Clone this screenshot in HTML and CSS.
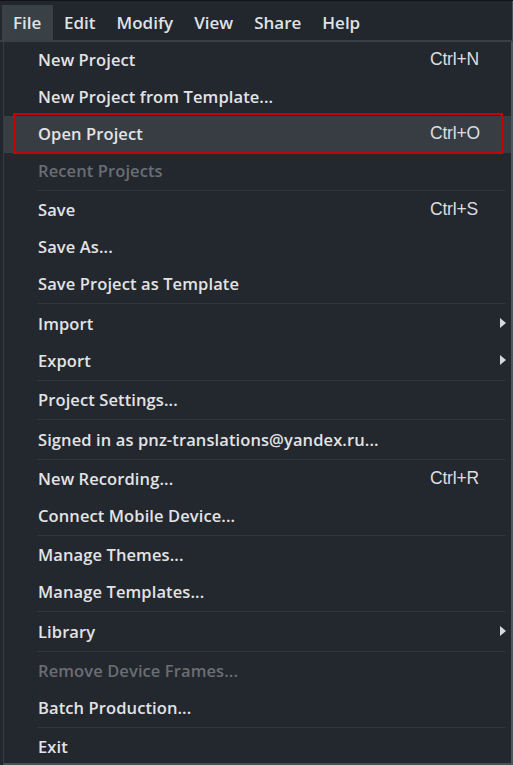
FILE: index.html
```html
<!DOCTYPE html>
<html>
<head>
<meta charset="utf-8">
<link rel="stylesheet" href="styles.css">
</head>
<body>
<div class="app">
  <div class="menubar">
    <span class="tab active">File</span>
    <span class="tab">Edit</span>
    <span class="tab">Modify</span>
    <span class="tab">View</span>
    <span class="tab">Share</span>
    <span class="tab">Help</span>
  </div>
  <div class="menu">
    <div class="row"><span class="label">New Project</span><span class="key">Ctrl+N</span></div>
    <div class="row"><span class="label">New Project from Template...</span></div>
    <div class="row hover"><span class="label">Open Project</span><span class="key">Ctrl+O</span><span class="mark"></span></div>
    <div class="row disabled"><span class="label">Recent Projects</span></div>
    <div class="sep"></div>
    <div class="row"><span class="label">Save</span><span class="key">Ctrl+S</span></div>
    <div class="row"><span class="label">Save As...</span></div>
    <div class="row"><span class="label">Save Project as Template</span></div>
    <div class="sep"></div>
    <div class="row"><span class="label">Import</span><span class="arrow"></span></div>
    <div class="row"><span class="label">Export</span><span class="arrow"></span></div>
    <div class="sep"></div>
    <div class="row"><span class="label">Project Settings...</span></div>
    <div class="sep"></div>
    <div class="row"><span class="label">Signed in as pnz-translations@yandex.ru...</span></div>
    <div class="sep"></div>
    <div class="row"><span class="label">New Recording...</span><span class="key">Ctrl+R</span></div>
    <div class="row"><span class="label">Connect Mobile Device...</span></div>
    <div class="sep"></div>
    <div class="row"><span class="label">Manage Themes...</span></div>
    <div class="row"><span class="label">Manage Templates...</span></div>
    <div class="sep"></div>
    <div class="row"><span class="label">Library</span><span class="arrow"></span></div>
    <div class="sep"></div>
    <div class="row disabled"><span class="label">Remove Device Frames...</span></div>
    <div class="row"><span class="label">Batch Production...</span></div>
    <div class="sep"></div>
    <div class="row last"><span class="label">Exit</span></div>
  </div>
</div>
</body>
</html>
```
FILE: styles.css
```css
* { box-sizing: border-box; }
html, body {
  margin: 0;
  padding: 0;
  background: #22262d;
}
body {
  width: 513px;
  height: 765px;
  overflow: hidden;
  font-family: "Open Sans", "Noto Sans", sans-serif;
  color: #e2e3e5;
}
.app {
  border-top: 1px solid #121418;
  height: 765px;
  display: flex;
  flex-direction: column;
}
.menubar {
  flex: 0 0 41px;
  display: flex;
  align-items: stretch;
  padding-top: 4px;
  padding-left: 2px;
  background: #22262d;
  border-bottom: 2px solid #3a3f47;
  border-right: 1px solid #4c5057;
}
.tab {
  display: flex;
  align-items: center;
  padding: 0 10px 0 11px;
  font-size: 17px;
  font-weight: 600;
  color: #dfe2e6;
}
.tab.active {
  background: #394046;
  width: 51px;
}
.menu {
  flex: 1;
  min-height: 0;
  margin-left: 3px;
  border-left: 1px solid #363b42;
  border-right: 2px solid #50545b;
  border-bottom: 2px solid #4a4e55;
  background: #23272e;
  display: flex;
  flex-direction: column;
}
.row {
  position: relative;
  flex: 0 0 37px;
  display: grid;
  grid-template-columns: 392px 70px 6px 1fr;
  align-items: center;
  padding-left: 34px;
  padding-bottom: 2px;
  font-size: 16.5px;
  font-weight: 600;
  letter-spacing: 0.1px;
  color: #e2e3e5;
  white-space: nowrap;
}
.row.last {
  flex: 1 1 auto;
  min-height: 0;
  padding-bottom: 0;
}
.label { grid-column: 1; }
.key {
  grid-column: 2;
  font-family: "Liberation Sans", Arial, sans-serif;
  font-weight: 400;
  font-size: 17.5px;
  letter-spacing: -0.2px;
  color: #dcdde0;
}
.arrow {
  grid-column: 3;
  width: 0;
  height: 0;
  border-top: 5px solid transparent;
  border-bottom: 5px solid transparent;
  border-left: 6px solid #d6d8db;
}
.row.disabled { color: #6a6e74; }
.row.hover { background: #383d44; }
.mark {
  position: absolute;
  left: 9px;
  top: -3px;
  width: 490px;
  height: 41px;
  border: 2px solid #c4020a;
}
.sep {
  flex: 0 0 2.4px;
  margin: 0 5px 0 33px;
  border-top: 1px solid #30353c;
}
```
